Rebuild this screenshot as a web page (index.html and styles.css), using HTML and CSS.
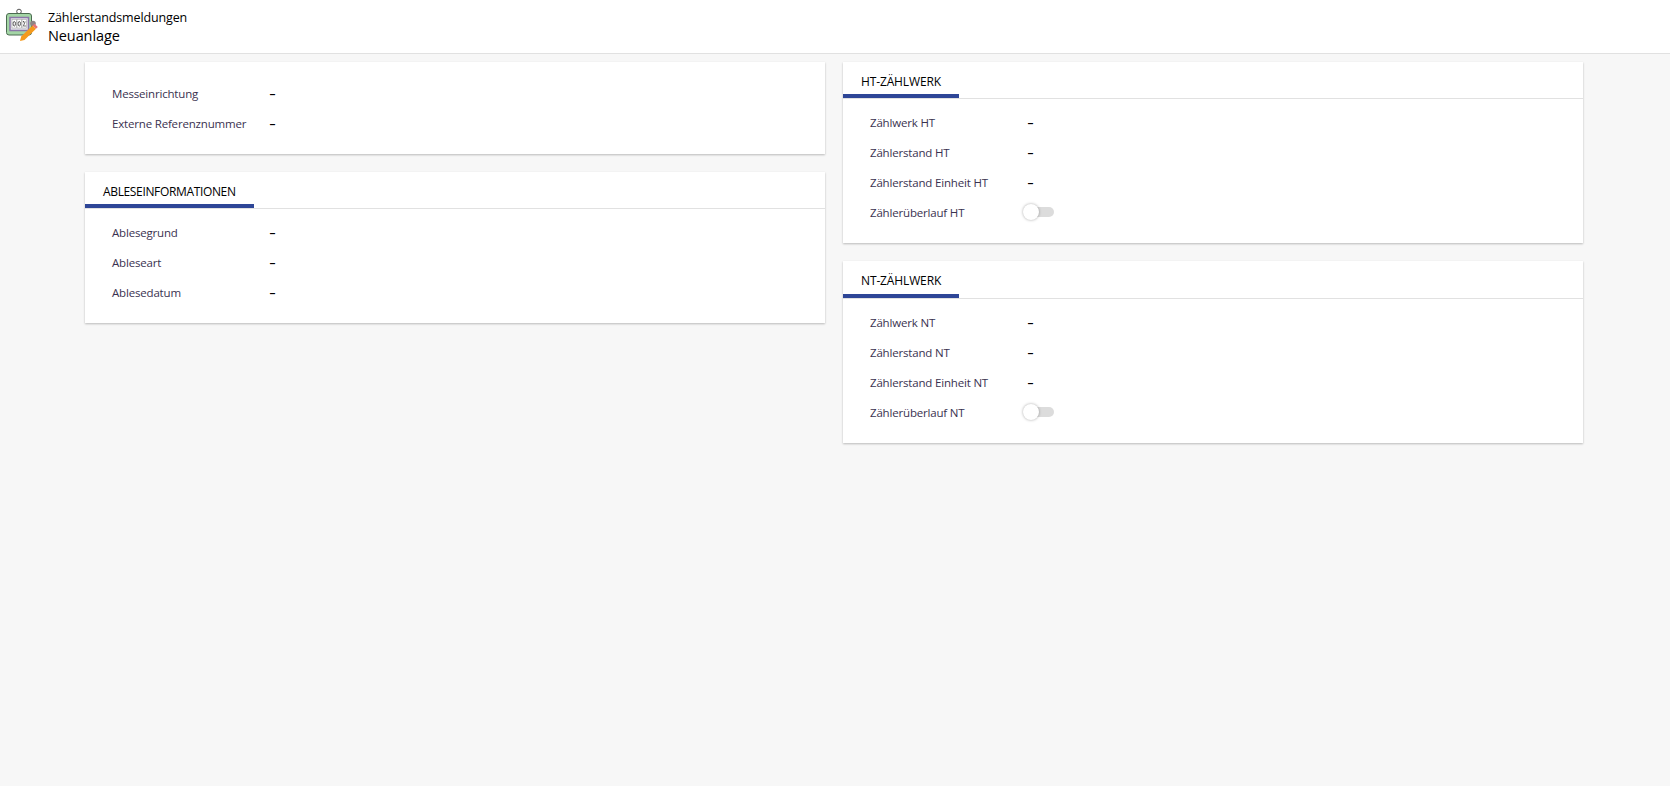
FILE: index.html
```html
<!DOCTYPE html>
<html lang="de">
<head>
<meta charset="utf-8">
<title>Zählerstandsmeldungen</title>
<link rel="stylesheet" href="styles.css">
</head>
<body>
<header class="topbar">
  <svg class="logo" width="40" height="40" viewBox="0 0 40 40">
    <circle cx="17" cy="6.500" r="2.300" fill="#fff" stroke="#555" stroke-width="1"/>
    <rect x="4.500" y="8.500" width="25" height="21.500" rx="2.500" fill="#a3d5a5" stroke="#4b6b50" stroke-width="1"/>
    <rect x="8" y="12.500" width="18.500" height="13" fill="#e4e4ea" stroke="#8a76a8" stroke-width="1.500"/>
    <rect x="10" y="14.500" width="4.500" height="8.500" fill="#fff" stroke="#999" stroke-width=".5"/>
    <rect x="15" y="14.500" width="4.500" height="8.500" fill="#fff" stroke="#999" stroke-width=".5"/>
    <rect x="20" y="14.500" width="4.500" height="8.500" fill="#fff" stroke="#999" stroke-width=".5"/>
    <ellipse cx="12.250" cy="18.750" rx="1.200" ry="2.300" fill="none" stroke="#444" stroke-width=".9"/>
    <ellipse cx="17.250" cy="18.750" rx="1.200" ry="2.300" fill="none" stroke="#444" stroke-width=".9"/>
    <path d="M21.200 21.500l2-5" stroke="#444" stroke-width=".8"/>
    <circle cx="21.500" cy="16.800" r=".7" fill="#444"/>
    <circle cx="23" cy="21" r=".7" fill="#444"/>
    <circle cx="31" cy="18.500" r="2.800" fill="#8f8585"/>
    <path d="M18 36l1.200-4.500L30.500 20.500l3.500 3.300L22.500 35z" fill="#f59a1c"/>
    <path d="M30.500 20.500l2-1.800 3.300 3.200-1.800 1.900z" fill="#e57373"/>
  </svg>
  <div class="titles">
    <div class="app-title">Zählerstandsmeldungen</div>
    <div class="page-title">Neuanlage</div>
  </div>
</header>
<main class="content">
  <div class="column">
    <section class="card card-plain">
      <div class="rows rows-plain">
        <div class="row"><span class="label">Messeinrichtung</span><span class="value">–</span></div>
        <div class="row"><span class="label">Externe Referenznummer</span><span class="value">–</span></div>
      </div>
    </section>
    <section class="card">
      <div class="tabbar"><span class="tab tab-long">ABLESEINFORMATIONEN</span></div>
      <div class="rows">
        <div class="row"><span class="label">Ablesegrund</span><span class="value">–</span></div>
        <div class="row"><span class="label">Ableseart</span><span class="value">–</span></div>
        <div class="row"><span class="label">Ablesedatum</span><span class="value">–</span></div>
      </div>
    </section>
  </div>
  <div class="column">
    <section class="card">
      <div class="tabbar"><span class="tab">HT-ZÄHLWERK</span></div>
      <div class="rows">
        <div class="row"><span class="label">Zählwerk HT</span><span class="value">–</span></div>
        <div class="row"><span class="label">Zählerstand HT</span><span class="value">–</span></div>
        <div class="row"><span class="label">Zählerstand Einheit HT</span><span class="value">–</span></div>
        <div class="row"><span class="label">Zählerüberlauf HT</span><span class="toggle"><span class="knob"></span></span></div>
      </div>
    </section>
    <section class="card">
      <div class="tabbar tabbar-tall"><span class="tab">NT-ZÄHLWERK</span></div>
      <div class="rows">
        <div class="row"><span class="label">Zählwerk NT</span><span class="value">–</span></div>
        <div class="row"><span class="label">Zählerstand NT</span><span class="value">–</span></div>
        <div class="row"><span class="label">Zählerstand Einheit NT</span><span class="value">–</span></div>
        <div class="row"><span class="label">Zählerüberlauf NT</span><span class="toggle"><span class="knob"></span></span></div>
      </div>
    </section>
  </div>
</main>
</body>
</html>
```
FILE: styles.css
```css
* { box-sizing: border-box; }
html, body { height: 100%; }
body {
  margin: 0;
  background: #f7f7f7;
  font-family: "Open Sans", "Noto Sans", sans-serif;
  color: #000;
  overflow: hidden;
}
.topbar {
  display: flex;
  align-items: flex-start;
  height: 54px;
  background: #fff;
  border-bottom: 1px solid #e1e1e1;
}
.logo { margin: 5px 0 0 2px; flex: none; }
.titles { margin: 9px 0 0 6px; }
.app-title { font-size: 12.500px; line-height: 17px; letter-spacing: -.13px; }
.page-title { font-size: 14.500px; line-height: 20px; letter-spacing: -.1px; }
.content {
  display: grid;
  grid-template-columns: 740px 740px;
  column-gap: 18px;
  padding: 8px 0 0 85px;
  align-items: start;
}
.column { display: flex; flex-direction: column; gap: 18px; }
.card {
  background: #fff;
  box-shadow: 0 1px 2px rgba(0,0,0,.25);
  padding-bottom: 16px;
}
.card-plain { padding-top: 16px; }
.tabbar {
  height: 37px;
  border-bottom: 1px solid #e1e1e1;
  display: flex;
}
.tabbar-tall { height: 38px; }
.tab {
  height: 100%;
  padding: 11px 18px 0;
  font-size: 12px;
  line-height: 18px;
  letter-spacing: -.13px;
  border-bottom: 4px solid #2e4697;
}
.tab-long { letter-spacing: -.35px; }
.rows { padding: 8px 0 0 27px; }
.rows-plain { padding-top: 0; }
.row { display: flex; align-items: center; height: 30px; font-size: 11.500px; }
.label { width: 158px; color: #3a3250; letter-spacing: -.18px; }
.value { color: #000; font-weight: 600; font-size: 12px; margin-left: -.5px; }
.toggle {
  position: relative;
  display: block;
  width: 27px;
  height: 10px;
  margin-left: -1px;
  border-radius: 5px;
  background: #dcdcdc;
}
.knob {
  position: absolute;
  left: -4px;
  top: -3px;
  width: 16px;
  height: 16px;
  border-radius: 50%;
  background: #fff;
  box-shadow: 0 0 3px rgba(0,0,0,.35);
}
```
